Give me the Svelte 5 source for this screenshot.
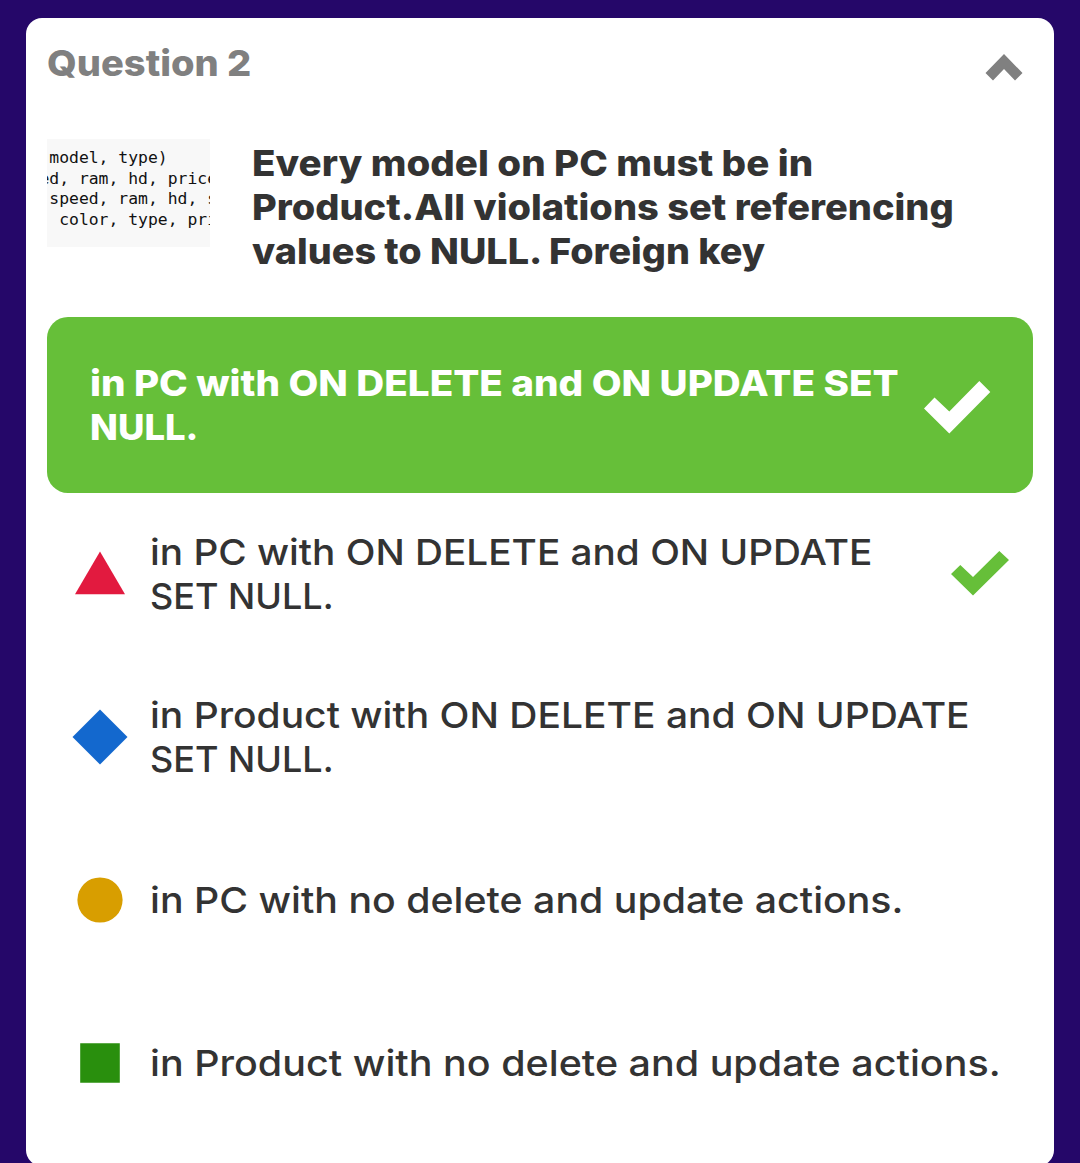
<script>
  const heading = [{ text: 'Question 2', stretch: 1.058 }];
  const title = [
    { text: 'Every model on PC must be in', stretch: 1.07 },
    { text: 'Product.All violations set referencing', stretch: 1.056 },
    { text: 'values to NULL. Foreign key', stretch: 1.049 }
  ];
  const correct = [
    { text: 'in PC with ON DELETE and ON UPDATE SET', stretch: 1.073 },
    { text: 'NULL.', stretch: 1.012 }
  ];
  const options = [
    {
      shape: 'triangle',
      right: true,
      lines: [
        { text: 'in PC with ON DELETE and ON UPDATE', stretch: 1.076 },
        { text: 'SET NULL.', stretch: 1 }
      ]
    },
    {
      shape: 'diamond',
      lines: [
        { text: 'in Product with ON DELETE and ON UPDATE', stretch: 1.083 },
        { text: 'SET NULL.', stretch: 1 }
      ]
    },
    { shape: 'circle', lines: [{ text: 'in PC with no delete and update actions.', stretch: 1.091 }] },
    { shape: 'square', lines: [{ text: 'in Product with no delete and update actions.', stretch: 1.096 }] }
  ];
  const code = [' model, type)', 'ed, ram, hd, price', ' speed, ram, hd, s', '  color, type, pri'];
</script>

{#snippet textLines(lines)}
  {#each lines as line}
    <span class="line" style="transform: scaleX({line.stretch})">{line.text}</span>
  {/each}
{/snippet}

<main class="page">
  <section class="card">
    <header class="head">
      <h2>{@render textLines(heading)}</h2>
      <svg class="chevron" viewBox="0 0 38 28" aria-hidden="true">
        <path d="M19 1 37.5 20 30 27.5 19 16 8 27.5 .5 20z" />
      </svg>
    </header>

    <div class="prompt">
      <div class="thumb">
        {#each code as row}
          <code>{row}</code>
        {/each}
      </div>
      <h1>{@render textLines(title)}</h1>
    </div>

    <div class="banner">
      <p>{@render textLines(correct)}</p>
      <svg class="tick-large" viewBox="0 0 68 54" aria-hidden="true">
        <path d="M1 28.5 11.5 17.5 26.3 31.5 56.3 1 67.3 12 26.3 53.5z" />
      </svg>
    </div>

    <ul class="options">
      {#each options as option}
        <li>
          <svg class="shape" viewBox="0 0 56 56" aria-hidden="true">
            {#if option.shape === 'triangle'}
              <path fill="#e21a3f" d="M28 5.5 53 48.2H3z" />
            {:else if option.shape === 'diamond'}
              <path fill="#1368ce" d="M28 .5 55.5 28 28 55.5.5 28z" />
            {:else if option.shape === 'circle'}
              <circle fill="#d89e00" cx="28" cy="28" r="22.6" />
            {:else}
              <path fill="#298f0d" d="M8.2 8.2h39.6v39.6H8.2z" />
            {/if}
          </svg>
          <p>{@render textLines(option.lines)}</p>
          {#if option.right}
            <svg class="tick" viewBox="0 0 60 46" aria-hidden="true">
              <path d="M1 24 10.3 15 23 27 49.3 1 59 10 23 45.5z" />
            </svg>
          {/if}
        </li>
      {/each}
    </ul>
  </section>
</main>

<style>
  :global(body) {
    background: #250769;
  }
  .page {
    box-sizing: border-box;
    height: 1163px;
    padding: 18px 26px 0;
    overflow: hidden;
    background: #250769;
    color: #333;
    font: 500 36px/44px Inter, 'Liberation Sans', sans-serif;
  }
  h1, h2, p, ul {
    margin: 0;
    padding: 0;
    font-size: inherit;
  }
  svg {
    display: block;
    flex: none;
  }
  .card {
    box-sizing: border-box;
    height: 1148px;
    padding: 0 21px;
    border-radius: 16px;
    background: #fff;
  }
  .head {
    display: flex;
    justify-content: space-between;
    height: 121px;
    padding-right: 10px;
  }
  h2 {
    margin-top: 23px;
    color: #808080;
    font-weight: 800;
  }
  .chevron {
    width: 38px;
    height: 28px;
    margin-top: 35px;
    fill: #808080;
  }
  .prompt {
    display: flex;
    gap: 42px;
    height: 178px;
  }
  .thumb {
    box-sizing: border-box;
    display: flex;
    flex: none;
    flex-direction: column;
    width: 163px;
    height: 108px;
    padding-top: 9px;
    overflow: hidden;
    background: #f8f8f8;
    color: #111;
  }
  code {
    margin-left: -7.6px;
    white-space: pre;
    font: 16.4px/20.5px 'DejaVu Sans Mono', monospace;
  }
  h1 {
    margin-top: 2px;
    font-weight: 800;
  }
  .line {
    display: block;
    width: max-content;
    white-space: nowrap;
    transform-origin: 0 50%;
  }
  .banner {
    box-sizing: border-box;
    display: flex;
    justify-content: space-between;
    align-items: center;
    height: 176px;
    padding: 0 42px;
    border-radius: 21px;
    background: #66bf39;
    color: #fff;
    font-weight: 800;
  }
  .banner p {
    width: 800px;
    padding-left: 0.6px;
  }
  .tick-large {
    width: 68px;
    height: 54px;
    margin-top: 4px;
    fill: #fff;
  }
  .options {
    margin-top: -1px;
    list-style: none;
  }
  li {
    display: flex;
    align-items: center;
    height: 163px;
    padding: 0 23px 0 25px;
  }
  .shape {
    width: 56px;
    height: 56px;
    margin-right: 22px;
  }
  li p {
    flex: 1;
    min-width: 0;
  }
  .tick {
    width: 60px;
    height: 46px;
    margin-bottom: 2px;
    fill: #66bf39;
  }
</style>
